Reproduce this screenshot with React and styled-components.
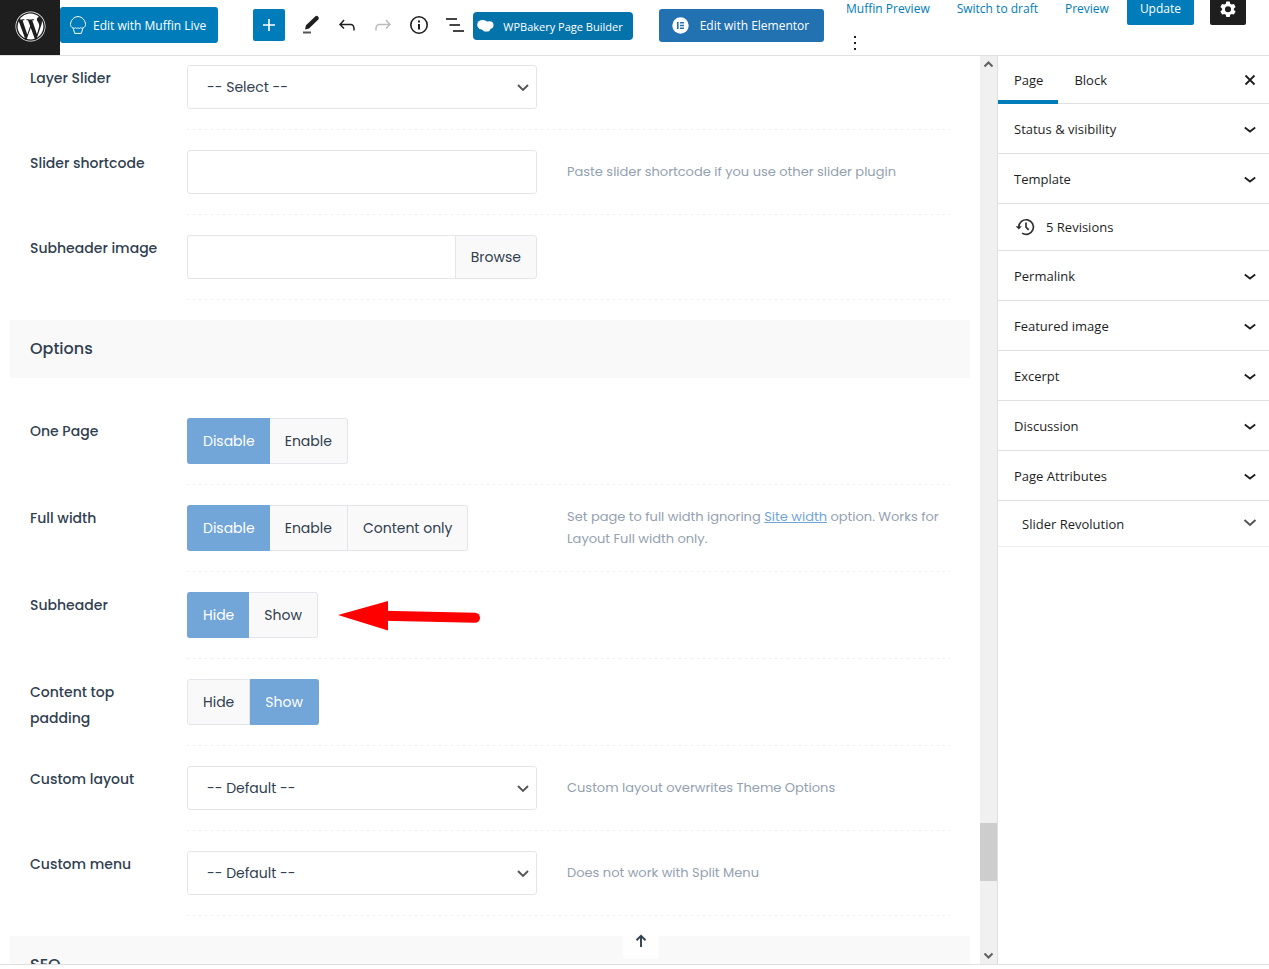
import React, { useState } from 'react';
import styled, { createGlobalStyle } from 'styled-components';
import { FaWordpress } from 'react-icons/fa';

const GlobalStyle = createGlobalStyle`
  * {
    box-sizing: border-box;
  }

  body {
    margin: 0;
    background: #fff;
    color: #1e1e1e;
    font-family: "Segoe UI", "Open Sans", "Noto Sans", sans-serif;
    font-size: 13px;
  }

  button, input, select {
    font: inherit;
    color: inherit;
  }
`;

const Page = styled.div`
  display: flex;
  flex-direction: column;
  height: 100vh;
  padding-bottom: 4px;
  overflow: hidden;
`;

/* Barra superior */

const Header = styled.header`
  display: flex;
  flex: none;
  height: 56px;
  overflow: hidden;
  border-bottom: 1px solid #e0e0e0;
  font-size: 12px;
`;

const HomeLink = styled.a`
  display: flex;
  align-items: center;
  justify-content: center;
  width: 60px;
  height: 56px;
  padding-bottom: 4px;
  flex: none;
  background: #1e1e1e;
  color: #fff;
`;

const Toolbar = styled.div`
  display: flex;
  align-items: center;
  flex: 1;
  padding-bottom: 5px;
`;

const BuilderButton = styled.button`
  display: flex;
  align-items: center;
  gap: 7px;
  height: 36px;
  padding: 0 12px 0 10px;
  border: none;
  border-radius: 3px;
  background: #007cba;
  color: #fff;
  white-space: nowrap;
  cursor: pointer;
`;

const BakeryButton = styled(BuilderButton)`
  gap: 9px;
  height: 28px;
  padding: 0 10px 0 4px;
  margin-top: 2px;
  border-radius: 4px;
  background: #0473aa;
  font-size: 11px;
`;

const ElementorButton = styled(BuilderButton)`
  gap: 11px;
  height: 33px;
  padding: 0 15px 0 13px;
  margin-left: 26px;
  background: #2271b1;
`;

const Tools = styled.div`
  display: flex;
  align-items: center;
  margin-left: 35px;
`;

const AddButton = styled.button`
  display: flex;
  align-items: center;
  justify-content: center;
  width: 32px;
  height: 32px;
  margin-right: 8px;
  padding: 0;
  border: none;
  border-radius: 2px;
  background: #007cba;
  color: #fff;
`;

const IconButton = styled.button`
  display: flex;
  align-items: center;
  justify-content: center;
  width: 36px;
  height: 36px;
  padding: 0;
  border: none;
  background: transparent;
  color: ${(props) => (props.disabled ? '#bbb' : '#1e1e1e')};
`;

const Settings = styled.div`
  display: flex;
  flex-direction: column;
  justify-content: center;
  flex: none;
  padding-right: 23px;
`;

const SettingsRow = styled.div`
  display: flex;
  align-items: center;
  gap: 9px;
  flex: none;
  height: ${(props) => props.$height}px;
`;

const TextButton = styled.button`
  height: 32px;
  padding: 0 9px;
  border: none;
  background: transparent;
  color: #007cba;
`;

const UpdateButton = styled.button`
  height: 33px;
  padding: 0 13px;
  margin-right: 7px;
  border: none;
  border-radius: 2px;
  background: #007cba;
  color: #fff;
`;

const GearButton = styled.button`
  display: flex;
  align-items: center;
  justify-content: center;
  width: 36px;
  height: 33px;
  padding: 0;
  border: none;
  border-radius: 2px;
  background: #1e1e1e;
  color: #fff;
`;

/* Cuerpo */

const Body = styled.div`
  position: relative;
  display: flex;
  flex: 1;
  min-height: 0;
  border-bottom: 1px solid #e0e0e0;
`;

const Content = styled.main`
  flex: 1;
  min-width: 0;
  overflow: hidden;
  padding: 0 10px;
  color: #304050;
  font-family: Poppins, Inter, sans-serif;
  font-size: 14px;
`;

const SectionTitle = styled.h2`
  margin: 0;
  padding: 0 20px;
  background: #f9f9f9;
  font-size: 16px;
  font-weight: 500;
  line-height: 58px;
`;

const Rows = styled.div`
  display: grid;
  gap: 20px;
  padding: ${(props) => props.$top}px 20px 20px;
`;

const Row = styled.div`
  display: grid;
  grid-template-columns: 157px 1fr;
`;

const Label = styled.label`
  padding-right: ${(props) => (props.$wide ? 0 : 20)}px;
  font-size: 14px;
  font-weight: 500;
  line-height: 26px;
`;

const Field = styled.div`
  display: grid;
  grid-template-columns: 350px 1fr;
  gap: 30px;
  align-items: center;
  padding-bottom: 21px;
  background: repeating-linear-gradient(to right, #ececec 0 2px, transparent 2px 6px) bottom / 100% 1px no-repeat;
`;

const Help = styled.p`
  margin: 0;
  color: #93a1b0;
  font-size: 13px;
  line-height: 22px;

  a {
    color: #72a5d8;
  }
`;

const SelectBox = styled.div`
  position: relative;

  svg {
    position: absolute;
    top: 18px;
    right: 8px;
    pointer-events: none;
  }
`;

const Select = styled.select`
  display: block;
  width: 100%;
  height: 44px;
  padding: 0 19px;
  appearance: none;
  border: 1px solid #e3e7eb;
  border-radius: 3px;
  background: #fff;
`;

const Input = styled.input`
  display: block;
  width: 100%;
  min-width: 0;
  height: 44px;
  padding: 0 19px;
  border: 1px solid #e3e7eb;
  border-radius: 3px;
  background: #fff;
`;

const Upload = styled.div`
  display: flex;

  input {
    flex: 1;
    border-right: none;
    border-radius: 3px 0 0 3px;
  }
`;

const BrowseButton = styled.button`
  height: 44px;
  padding: 0 15px;
  border: 1px solid #e3e7eb;
  border-radius: 0 3px 3px 0;
  background: #f9f9f9;
`;

const Segments = styled.div`
  display: flex;
  height: 46px;
`;

const Segment = styled.label`
  display: flex;
  align-items: center;
  padding: 0 15px;
  border: 1px solid ${(props) => (props.$active ? '#72a5d8' : '#e3e7eb')};
  border-left-width: 0;
  border-right-width: ${(props) => (props.$active ? 0 : 1)}px;
  background: ${(props) => (props.$active ? '#72a5d8' : '#f9f9f9')};
  color: ${(props) => (props.$active ? '#fff' : 'inherit')};
  cursor: pointer;

  &:first-child {
    border-left-width: 1px;
    border-radius: 3px 0 0 3px;
  }

  &:last-child {
    border-right-width: 1px;
    border-radius: 0 3px 3px 0;
  }

  input {
    position: absolute;
    opacity: 0;
    pointer-events: none;
  }
`;

const ToggleCell = styled.div`
  display: flex;
  align-items: center;
  gap: 20px;
  white-space: nowrap;
`;

const TopButton = styled.button`
  position: absolute;
  bottom: 5px;
  left: calc(50% - 12px);
  display: flex;
  align-items: center;
  justify-content: center;
  width: 36px;
  height: 36px;
  padding: 0;
  border: none;
  border-radius: 4px;
  background: rgba(255, 255, 255, 0.8);
  color: #304050;
`;

const ScrollBar = styled.div`
  display: flex;
  flex-direction: column;
  align-items: center;
  flex: none;
  width: 17px;
  background: #f0f0f0;
  color: #606060;

  svg {
    flex: none;
  }
`;

const Track = styled.div`
  display: grid;
  grid-template-rows: 750fr 58fr 66fr;
  flex: 1;
  width: 100%;
`;

const Thumb = styled.div`
  grid-row: 2;
  background: #cdcdcd;
`;

/* Panel lateral */

const Sidebar = styled.aside`
  flex: none;
  width: 272px;
  border-left: 1px solid #e0e0e0;
`;

const Tabs = styled.div`
  display: flex;
  height: 48px;
  border-bottom: 1px solid #e0e0e0;
`;

const Tab = styled.button`
  height: 48px;
  padding: 0 15px 0 16px;
  border: none;
  background: transparent;
  box-shadow: ${(props) => (props.$active ? 'inset 0 -4px 0 #007cba' : 'none')};
`;

const CloseButton = styled(IconButton)`
  height: 48px;
  margin-left: auto;
  margin-right: 1px;
`;

const PanelButton = styled.button`
  display: flex;
  align-items: center;
  justify-content: space-between;
  width: 100%;
  height: 50px;
  padding: 0 7px 0 16px;
  border: none;
  border-bottom: 1px solid #e0e0e0;
  background: transparent;
  text-align: left;
`;

const RevisionsLink = styled.a`
  display: flex;
  align-items: center;
  gap: 8px;
  height: 47px;
  padding: 0 16px;
  border-bottom: 1px solid #e0e0e0;
  color: #1e1e1e;
  font-weight: 500;
  text-decoration: none;
`;

const MetaBox = styled.div`
  margin-top: -1px;
  border-top: 1px solid #e0e0e0;
`;

const MetaBoxButton = styled(PanelButton)`
  height: 46px;
  padding-left: 24px;
  border-bottom-color: #eee;
`;

const Chevron = () => (
  <svg width="24" height="24" viewBox="0 0 24 24" fill="none" stroke="currentColor" strokeWidth="1.8">
    <path d="M6.800 10.500l5.200 4 5.200-4" />
  </svg>
);

const MetaChevron = () => (
  <svg width="24" height="24" viewBox="0 0 24 24" fill="none" stroke="#555" strokeWidth="2">
    <path d="M6.500 8l5.500 5 5.500-5" />
  </svg>
);

const SelectArrow = () => (
  <svg width="12" height="9" viewBox="0 0 12 9" fill="none" stroke="#555" strokeWidth="1.900">
    <path d="M1 2l5 5 5-5" />
  </svg>
);

const ScrollArrow = ({ up }) => (
  <svg width="17" height="17" viewBox="0 0 17 17" fill="none" stroke="currentColor" strokeWidth="2">
    <path d={up ? 'M4.500 10.500l4-4 4 4' : 'M4.500 6.500l4 4 4-4'} />
  </svg>
);

const MuffinIcon = () => (
  <svg width="16" height="18" viewBox="0 0 16 18" fill="none" stroke="#fff" strokeWidth="1">
    <path d="M3 12C1.400 11.400.5 10.200.5 8.500.5 4.500 3.800.6 8 .6s7.500 3.900 7.500 7.900c0 1.700-.9 2.900-2.500 3.500" />
    <path d="M3 11.600c.8.900 1.800.9 2.500.1.800.9 1.700.9 2.500 0 .8.900 1.700.9 2.500 0 .7.800 1.700.8 2.500-.1M3.200 12.400l1.500 5h6.600l1.500-5" />
  </svg>
);

const BakeryIcon = () => (
  <svg width="17" height="14" viewBox="0 0 17 14" fill="#fff">
    <ellipse cx="5.700" cy="5.800" rx="5.500" ry="4.900" />
    <ellipse cx="12.400" cy="6.100" rx="4.100" ry="3.900" />
    <ellipse cx="9.300" cy="9.400" rx="4" ry="3.200" />
  </svg>
);

const ElementorIcon = () => (
  <svg width="17" height="17" viewBox="0 0 17 17">
    <circle cx="8.500" cy="8.500" r="8.200" fill="#fff" />
    <path d="M5 5h1.600v7H5zM8 5h4v1.400H8zM8 7.800h4v1.400H8zM8 10.600h4V12H8z" fill="#2271b1" />
  </svg>
);

const PenIcon = () => (
  <svg width="20" height="22" viewBox="0 0 20 22">
    <path d="M4 15.500l1-4.200L14.200 2.500q1.400-1.300 2.800 0t.6 2.800L8 14.500z" fill="#1e1e1e" />
    <path d="M2 18.500h8" stroke="#555" strokeWidth="2" />
  </svg>
);

const UndoIcon = ({ flip }) => (
  <svg width="24" height="24" viewBox="0 0 24 24" fill="currentColor" transform={flip ? 'scale(-1 1)' : undefined}>
    <path d="M18.300 11.700c-.6-.6-1.400-.9-2.300-.9H6.700l2.900-3.300-1.100-1-4.500 5L8.500 16l1-1-2.700-2.700H16c.5 0 .9.200 1.300.5 1 1 1 3.400 1 4.500v.3h1.500v-.2c0-1.500 0-4.300-1.500-5.700z" />
  </svg>
);

const InfoIcon = () => (
  <svg width="20" height="20" viewBox="0 0 20 20" fill="none" stroke="currentColor">
    <circle cx="10" cy="10" r="8.200" strokeWidth="1.600" />
    <path d="M10 9v5.500M10 5.500v2" strokeWidth="2" />
  </svg>
);

const OutlineIcon = () => (
  <svg width="20" height="20" viewBox="0 0 20 20" fill="none" stroke="#444" strokeWidth="1.800">
    <path d="M1 4h11M4.500 10H15M8 16h11" />
  </svg>
);

const GearIcon = () => (
  <svg width="24" height="24" viewBox="0 0 24 24" fill="currentColor">
    <path
      fillRule="evenodd"
      d="M10.300 4.500h3.400l.5 2.200 1.500.9 2.200-.7 1.700 3-1.700 1.500v1.700l1.700 1.500-1.700 3-2.200-.7-1.500.9-.5 2.200h-3.400l-.5-2.200-1.500-.9-2.200.7-1.700-3 1.700-1.500v-1.700L4.400 9.900l1.700-3 2.200.7 1.500-.9zM12 9.200a3.050 3.050 0 1 0 0 6.100 3.050 3.050 0 0 0 0-6.100z"
    />
  </svg>
);

const MoreIcon = () => (
  <svg width="24" height="24" viewBox="0 0 24 24" fill="currentColor">
    <path d="M11 4h2v2h-2zM11 10h2v2h-2zM11 16h2v2h-2z" />
  </svg>
);

const CloseIcon = () => (
  <svg width="12" height="12" viewBox="0 0 12 12" fill="none" stroke="currentColor" strokeWidth="1.800">
    <path d="M1.500 1.500l9 9M10.500 1.500l-9 9" />
  </svg>
);

const BackupIcon = () => (
  <svg width="24" height="24" viewBox="0 0 24 24" fill="none" stroke="#333" strokeWidth="1.700">
    <path d="M4.800 12a7.300 7.300 0 1 1 3.200 6.100" />
    <path d="M12 7.500v4.700l2.700 2.700" />
    <path d="M1.600 11.200h6.200l-3 3.200z" fill="#333" stroke="none" />
  </svg>
);

const UpIcon = () => (
  <svg width="12" height="14" viewBox="0 0 12 14" fill="none" stroke="currentColor" strokeWidth="1.900">
    <path d="M6 13V2M1.500 6.200L6 1.800l4.500 4.400" />
  </svg>
);

const RedArrow = () => (
  <svg width="144" height="32" viewBox="0 0 144 32">
    <path d="M0 16L50 2v29.500z" fill="#f00" />
    <path d="M45 16.800l92 2" stroke="#f00" strokeWidth="10" strokeLinecap="round" />
  </svg>
);

const panels = ['Permalink', 'Featured image', 'Excerpt', 'Discussion', 'Page Attributes'];

const SelectRow = ({ id, label, option, help }) => (
  <Row>
    <Label htmlFor={id}>{label}</Label>
    <Field>
      <SelectBox>
        <Select id={id}>
          <option>{option}</option>
        </Select>
        <SelectArrow />
      </SelectBox>
      {help && <Help>{help}</Help>}
    </Field>
  </Row>
);

const ToggleRow = ({ id, label, options, initial, help, children }) => {
  const [value, setValue] = useState(initial);

  return (
    <Row>
      <Label as="span" id={id}>{label}</Label>
      <Field>
        <ToggleCell>
          <Segments role="radiogroup" aria-labelledby={id}>
            {options.map((option) => (
              <Segment key={option} $active={option === value}>
                <input
                  type="radio"
                  name={id}
                  checked={option === value}
                  onChange={() => setValue(option)}
                />
                {option}
              </Segment>
            ))}
          </Segments>
          {children}
        </ToggleCell>
        {help && <Help>{help}</Help>}
      </Field>
    </Row>
  );
};

const App = () => {
  return (
    <Page>
      <GlobalStyle />
      <Header>
        <HomeLink href="#" aria-label="WordPress">
          <FaWordpress size={31} />
        </HomeLink>
        <Toolbar>
          <BuilderButton>
            <MuffinIcon />
            Edit with Muffin Live
          </BuilderButton>
          <Tools>
            <AddButton aria-label="Add block">
              <svg width="14" height="14" viewBox="0 0 14 14" stroke="#fff" strokeWidth="1.600">
                <path d="M7 1v12M1 7h12" />
              </svg>
            </AddButton>
            <IconButton aria-label="Tools"><PenIcon /></IconButton>
            <IconButton aria-label="Undo"><UndoIcon /></IconButton>
            <IconButton aria-label="Redo" disabled><UndoIcon flip /></IconButton>
            <IconButton aria-label="Details"><InfoIcon /></IconButton>
            <IconButton aria-label="Outline"><OutlineIcon /></IconButton>
          </Tools>
          <BakeryButton>
            <BakeryIcon />
            WPBakery Page Builder
          </BakeryButton>
          <ElementorButton>
            <ElementorIcon />
            Edit with Elementor
          </ElementorButton>
        </Toolbar>
        <Settings>
          <SettingsRow $height={33}>
            <TextButton>Muffin Preview</TextButton>
            <TextButton>Switch to draft</TextButton>
            <TextButton>Preview</TextButton>
            <UpdateButton>Update</UpdateButton>
            <GearButton aria-label="Settings"><GearIcon /></GearButton>
          </SettingsRow>
          <SettingsRow $height={38}>
            <IconButton aria-label="Options"><MoreIcon /></IconButton>
          </SettingsRow>
        </Settings>
      </Header>

      <Body>
        <Content>
          <Rows $top={9}>
            <SelectRow id="layer-slider" label="Layer Slider" option="-- Select --" />
            <Row>
              <Label htmlFor="slider-shortcode">Slider shortcode</Label>
              <Field>
                <Input id="slider-shortcode" type="text" />
                <Help>Paste slider shortcode if you use other slider plugin</Help>
              </Field>
            </Row>
            <Row>
              <Label $wide htmlFor="subheader-image">Subheader image</Label>
              <Field>
                <Upload>
                  <Input id="subheader-image" type="text" />
                  <BrowseButton>Browse</BrowseButton>
                </Upload>
              </Field>
            </Row>
          </Rows>

          <SectionTitle>Options</SectionTitle>
          <Rows $top={40}>
            <ToggleRow id="one-page" label="One Page" options={['Disable', 'Enable']} initial="Disable" />
            <ToggleRow
              id="full-width"
              label="Full width"
              options={['Disable', 'Enable', 'Content only']}
              initial="Disable"
              help={<>Set page to full width ignoring <a href="#">Site width</a> option. Works for Layout Full width only.</>}
            />
            <ToggleRow id="subheader" label="Subheader" options={['Hide', 'Show']} initial="Hide">
              <RedArrow />
            </ToggleRow>
            <ToggleRow id="top-padding" label="Content top padding" options={['Hide', 'Show']} initial="Show" />
            <SelectRow
              id="custom-layout"
              label="Custom layout"
              option="-- Default --"
              help="Custom layout overwrites Theme Options"
            />
            <SelectRow
              id="custom-menu"
              label="Custom menu"
              option="-- Default --"
              help="Does not work with Split Menu"
            />
          </Rows>
          <SectionTitle>SEO</SectionTitle>
        </Content>

        <ScrollBar>
          <ScrollArrow up />
          <Track>
            <Thumb />
          </Track>
          <ScrollArrow />
        </ScrollBar>

        <Sidebar>
          <Tabs>
            <Tab $active>Page</Tab>
            <Tab>Block</Tab>
            <CloseButton aria-label="Close settings"><CloseIcon /></CloseButton>
          </Tabs>
          <PanelButton>Status &amp; visibility<Chevron /></PanelButton>
          <PanelButton>Template<Chevron /></PanelButton>
          <RevisionsLink href="#">
            <BackupIcon />
            5 Revisions
          </RevisionsLink>
          {panels.map((panel) => (
            <PanelButton key={panel}>{panel}<Chevron /></PanelButton>
          ))}
          <MetaBox>
            <MetaBoxButton>Slider Revolution<MetaChevron /></MetaBoxButton>
          </MetaBox>
        </Sidebar>

        <TopButton aria-label="Back to top"><UpIcon /></TopButton>
      </Body>
    </Page>
  );
};

export default App;
